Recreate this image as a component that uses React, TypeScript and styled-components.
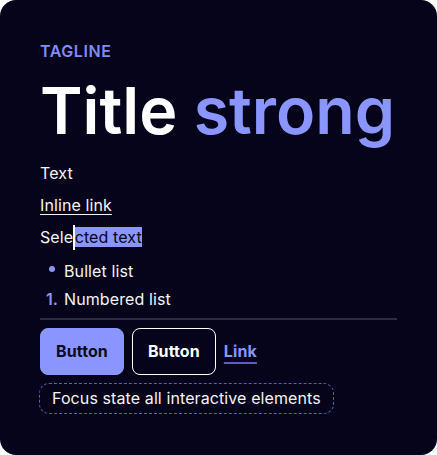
import React from "react";
import styled, { createGlobalStyle } from "styled-components";

const Global = createGlobalStyle`
  html, body { margin: 0; padding: 0; background: #ffffff; }
  body { font-family: Inter, "Noto Sans", sans-serif; letter-spacing: 0.1px; }
  * { box-sizing: border-box; }
`;

const ACCENT = "#8b95ff";
const BG = "#05041a";

const Card = styled.div`
  width: 437px;
  height: 455px;
  background: ${BG};
  border-radius: 16px;
  padding: 41px 40px 0 40px;
  color: #ffffff;
  display: flex;
  flex-direction: column;
  & > * { flex-shrink: 0; }
`;

const Tagline = styled.div`
  color: #828bf6;
  font-size: 16px;
  font-weight: 600;
  letter-spacing: 0.035em;
  line-height: 20px;
  text-transform: uppercase;
`;

const Title = styled.h1`
  margin: 14px 0 0 0;
  font-size: 64.5px;
  font-weight: 600;
  line-height: 72px;
  letter-spacing: 0;
  white-space: nowrap;
  color: #ffffff;
`;

const Strong = styled.span`
  color: ${ACCENT};
`;

const Body = styled.div`
  margin-top: 10px;
  display: flex;
  flex-direction: column;
  font-size: 16px;
  line-height: 32px;
`;

const Line = styled.div`
  color: #f4f4f7;
`;

const InlineLink = styled.a`
  color: #f4f4f7;
  text-decoration: underline;
  text-underline-offset: 3px;
  text-decoration-thickness: 1px;
`;

const Caret = styled.span`
  display: inline-block;
  width: 1.5px;
  height: 25px;
  background: #ffffff;
  vertical-align: -7px;
`;

const Selected = styled.span`
  background: ${ACCENT};
  color: ${BG};
`;

const List = styled.div`
  display: flex;
  flex-direction: column;
  margin-top: 4px;
`;

const ListItem = styled.div`
  display: flex;
  align-items: center;
  height: 28px;
  color: #f4f4f7;
`;

const Marker = styled.span`
  width: 24px;
  display: flex;
  justify-content: center;
  color: ${ACCENT};
  font-weight: 600;
`;

const Dot = styled.span`
  width: 6px;
  height: 6px;
  border-radius: 50%;
  background: ${ACCENT};
  margin-right: 1px;
  margin-top: -4px;
`;

const Divider = styled.hr`
  margin: 5px 0 8px 0;
  border: none;
  height: 1.5px;
  background: #2c2b42;
  width: 357px;
`;

const Actions = styled.div`
  display: flex;
  align-items: center;
  gap: 8px;
`;

const Button = styled.button<{ $variant: "primary" | "secondary" }>`
  font-family: Inter, "Noto Sans", sans-serif;
  font-size: 16px;
  font-weight: 700;
  letter-spacing: 0.1px;
  line-height: 19px;
  padding: 13px 15px;
  border-radius: 8px;
  cursor: pointer;
  background: ${(p) => (p.$variant === "primary" ? ACCENT : "transparent")};
  color: ${(p) => (p.$variant === "primary" ? "#0b0b22" : "#ffffff")};
  border: 1px solid ${(p) => (p.$variant === "primary" ? ACCENT : "#ffffff")};
`;

const TextLink = styled.a`
  color: ${ACCENT};
  font-size: 16px;
  font-weight: 700;
  text-decoration: underline;
  text-decoration-color: #5b5fc0;
  text-decoration-thickness: 1.5px;
  text-underline-offset: 5px;
`;

const Focus = styled.div`
  margin-top: 8px;
  align-self: flex-start;
  margin-left: -1px;
  border: 1.5px dashed #5a5fb5;
  border-radius: 10px;
  padding: 5px 12px;
  font-size: 16px;
  line-height: 19px;
  color: #f4f4f7;
`;

export default function App() {
  return (
    <>
      <Global />
      <Card>
        <Tagline>Tagline</Tagline>
        <Title>
          Title <Strong>strong</Strong>
        </Title>
        <Body>
          <Line>Text</Line>
          <Line>
            <InlineLink href="#">Inline link</InlineLink>
          </Line>
          <Line>
            Sele<Caret />
            <Selected>cted text</Selected>
          </Line>
          <List>
            <ListItem>
              <Marker>
                <Dot />
              </Marker>
              Bullet list
            </ListItem>
            <ListItem>
              <Marker>1.</Marker>
              Numbered list
            </ListItem>
          </List>
        </Body>
        <Divider />
        <Actions>
          <Button $variant="primary">Button</Button>
          <Button $variant="secondary">Button</Button>
          <TextLink href="#">Link</TextLink>
        </Actions>
        <Focus>Focus state all interactive elements</Focus>
      </Card>
    </>
  );
}
